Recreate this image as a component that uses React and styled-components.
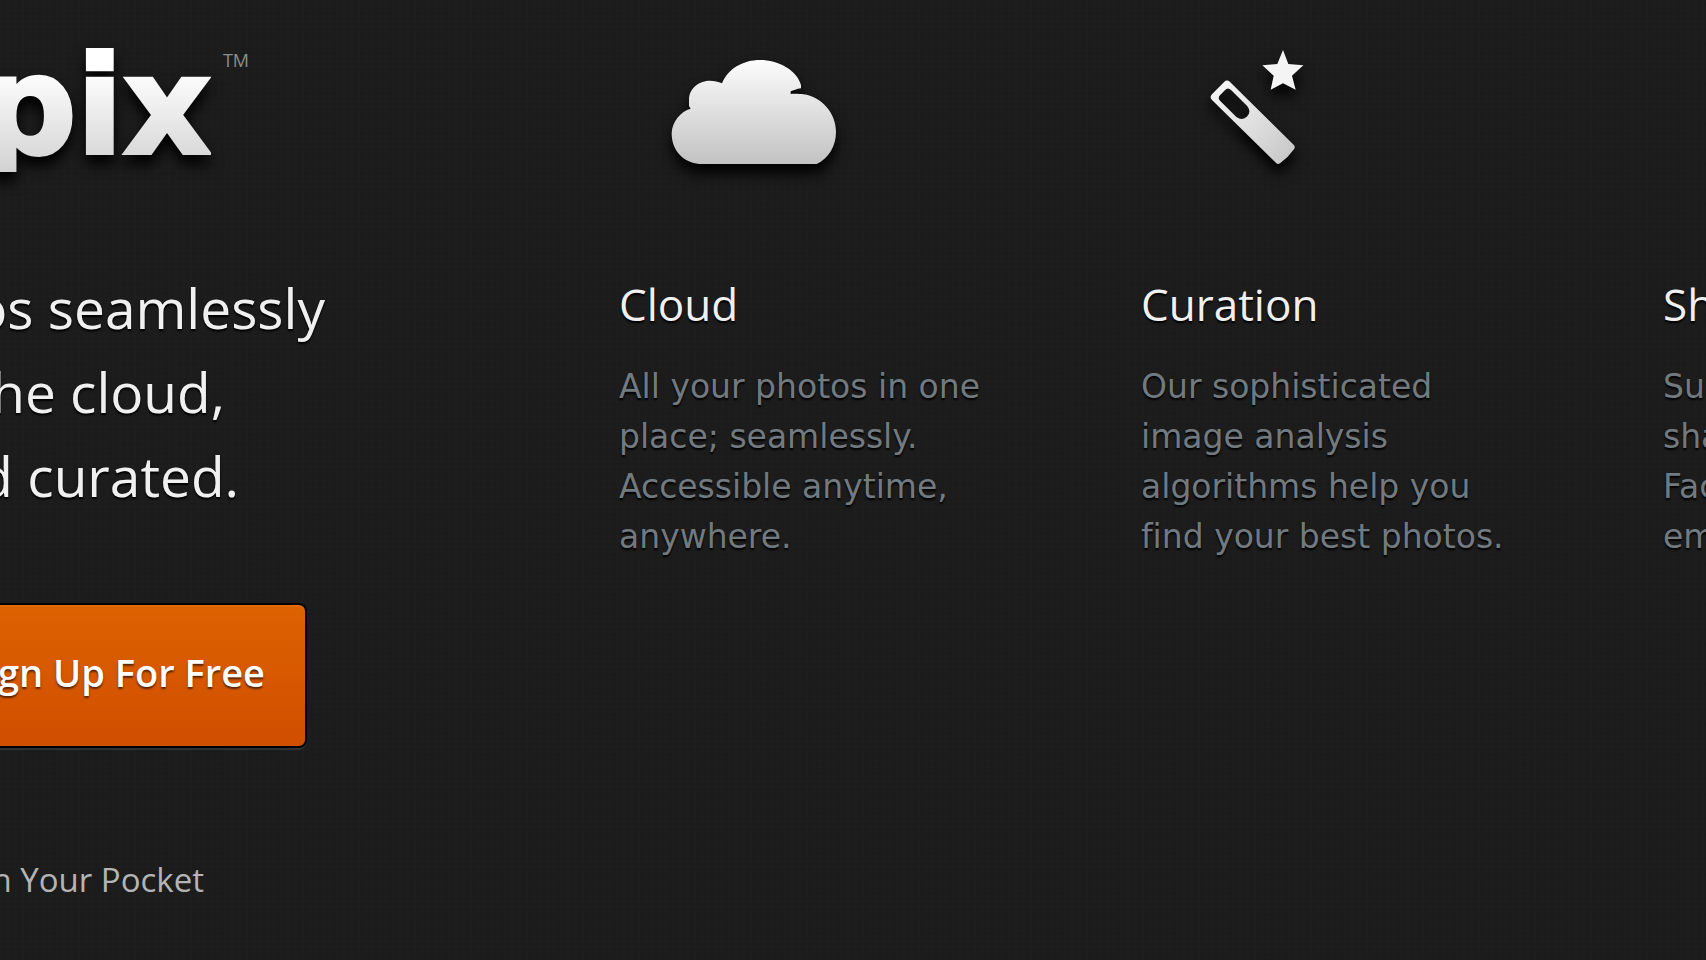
import React from "react"
import styled, { createGlobalStyle } from "styled-components"

const GlobalStyle = createGlobalStyle`
  * {
    box-sizing: border-box;
  }
  body {
    margin: 0;
    overflow-x: hidden;
    background-color: #1c1c1c;
    background-image:
      repeating-linear-gradient(90deg, rgba(255, 255, 255, 0.005) 0 3px, transparent 3px 7px),
      repeating-linear-gradient(0deg, rgba(0, 0, 0, 0.03) 0 2px, transparent 2px 5px);
    font-family: "Open Sans", "Noto Sans", sans-serif;
    color: #f0f0f0;
  }
`

const Page = styled.main`
  display: grid;
  grid-template-columns: 619fr 522fr 522fr 43fr;
  min-height: 100vh;
  overflow: hidden;
`

const Hero = styled.section`
  min-width: 0;
`

// content that runs off the left edge and ends at $end
const Run = styled.div`
  display: flex;
  justify-content: flex-end;
  width: ${props => props.$end}px;
  white-space: nowrap;
`

const Brand = styled(Run)`
  height: 266px;
  gap: 12px;
`

// the box stops short of the line, which trims the tail of the p
const Logo = styled.h1`
  height: 172px;
  margin: 0;
  font-family: "DejaVu Sans", sans-serif;
  font-size: 136px;
  font-weight: 700;
  line-height: 212px;
  background: linear-gradient(#fff 40%, #d2d2d2 100%);
  background-clip: text;
  color: transparent;
  -webkit-text-stroke: 4px transparent;
  filter: drop-shadow(0 9px 7px #000);
`

const Trademark = styled.span`
  padding-top: 48px;
  font-size: 18px;
  line-height: 24px;
  color: #8c8c8c;
`

const Tagline = styled.div`
  font-size: 55px;
  line-height: 84px;
  text-shadow: 0 2px 2px #000;
`

const SignUp = styled.button`
  flex: none;
  width: 380px;
  height: 145px;
  margin-top: 85px;
  padding: 0 40px 8px;
  border: 2px solid #000;
  border-radius: 8px;
  background: linear-gradient(#dd6200, #d04e00);
  box-shadow: inset 0 2px #e06c0c, 0 2px #2c3236;
  color: #fff;
  font-family: inherit;
  font-size: 38px;
  font-weight: 600;
  text-align: right;
  text-shadow: 0 2px 2px rgba(0, 0, 0, 0.6);
  cursor: pointer;
`

const PocketLink = styled.a`
  margin-top: 108px;
  font-size: 33px;
  line-height: 48px;
  color: #b4b4b4;
  text-decoration: none;
`

const Feature = styled.section`
  min-width: 0;
  white-space: nowrap;
`

const Icon = styled.svg`
  display: block;
  width: 272px;
  height: 200px;
  overflow: visible;
  filter: drop-shadow(0 9px 7px #000);
`

const FeatureTitle = styled.h2`
  margin: 72px 0 0;
  font-size: 44px;
  font-weight: 400;
  line-height: 64px;
  text-shadow: 0 2px 2px #000;
`

const FeatureText = styled.p`
  margin: 26px 0 0;
  font-family: "DejaVu Sans", sans-serif;
  font-size: 33px;
  font-variant-ligatures: none;
  line-height: 50px;
  color: #727a80;
  text-shadow: 0 2px 2px #000;
`

const CloudIcon = () => (
  <Icon viewBox="-63 -90 816 600" aria-hidden="true">
    <defs>
      <linearGradient id="cloud" x1="0" y1="0" x2="0" y2="1">
        <stop offset="0" stopColor="#fcfcfc" />
        <stop offset="1" stopColor="#c2c2c2" />
      </linearGradient>
    </defs>
    <path
      fill="url(#cloud)"
      d="M178 402C130 398 95 362 95 310C96 275 122 244 152 236L147 228V210C147 172 180 152 210 152C222 152 235 155 246 160C265 115 310 90 360 90C415 90 470 120 483 165V175C470 177 460 181 452 184V192C465 191 480 192 490 193C545 200 588 250 588 305C588 350 565 385 530 402Z"
    />
  </Icon>
)

const WandIcon = () => (
  <Icon viewBox="-117 -90 816 600" aria-hidden="true">
    <defs>
      <linearGradient id="wand" gradientUnits="userSpaceOnUse" x1="0" y1="0" x2="280" y2="0">
        <stop offset="0" stopColor="#f4f4f4" />
        <stop offset="1" stopColor="#cbcbcb" />
      </linearGradient>
    </defs>
    <path
      fill="#f4f4f4"
      d="M309 60L325 102L370 106L336 137L347 179L309 160L272 179L281 137L247 106L292 102Z"
    />
    <path
      fill="url(#wand)"
      fillRule="evenodd"
      transform="translate(117 177) rotate(44.6)"
      d="M8 -38H278Q285 -38 287 -30Q292 0 287 30Q285 38 278 38H8Q-4 38 -4 26V-26Q-4 -38 8 -38ZM28 -23Q15 -23 15 -10V10Q15 23 28 23H96Q118 20 118 0Q118 -20 96 -23Z"
    />
  </Icon>
)

const features = [
  {
    title: "Cloud",
    icon: <CloudIcon />,
    lines: ["All your photos in one", "place; seamlessly.", "Accessible anytime,", "anywhere."],
  },
  {
    title: "Curation",
    icon: <WandIcon />,
    lines: ["Our sophisticated", "image analysis", "algorithms help you", "find your best photos."],
  },
  {
    title: "Sh",
    icon: <Icon aria-hidden="true" />,
    lines: ["Su", "sha", "Fac", "em"],
  },
]

const App = () => (
  <>
    <GlobalStyle />
    <Page>
      <Hero>
        <Brand $end={249}>
          <Logo>pix</Logo>
          <Trademark>TM</Trademark>
        </Brand>
        <Tagline>
          <Run $end={325}>os seamlessly</Run>
          <Run $end={225}>he cloud,</Run>
          <Run $end={239}>d curated.</Run>
        </Tagline>
        <Run $end={307}>
          <SignUp type="button">gn Up For Free</SignUp>
        </Run>
        <Run $end={204}>
          <PocketLink href="#pocket">n Your Pocket</PocketLink>
        </Run>
      </Hero>
      {features.map(({ title, icon, lines }) => (
        <Feature key={title}>
          {icon}
          <FeatureTitle>{title}</FeatureTitle>
          <FeatureText>
            {lines.map(line => (
              <React.Fragment key={line}>
                {line}
                <br />
              </React.Fragment>
            ))}
          </FeatureText>
        </Feature>
      ))}
    </Page>
  </>
)

export default App
